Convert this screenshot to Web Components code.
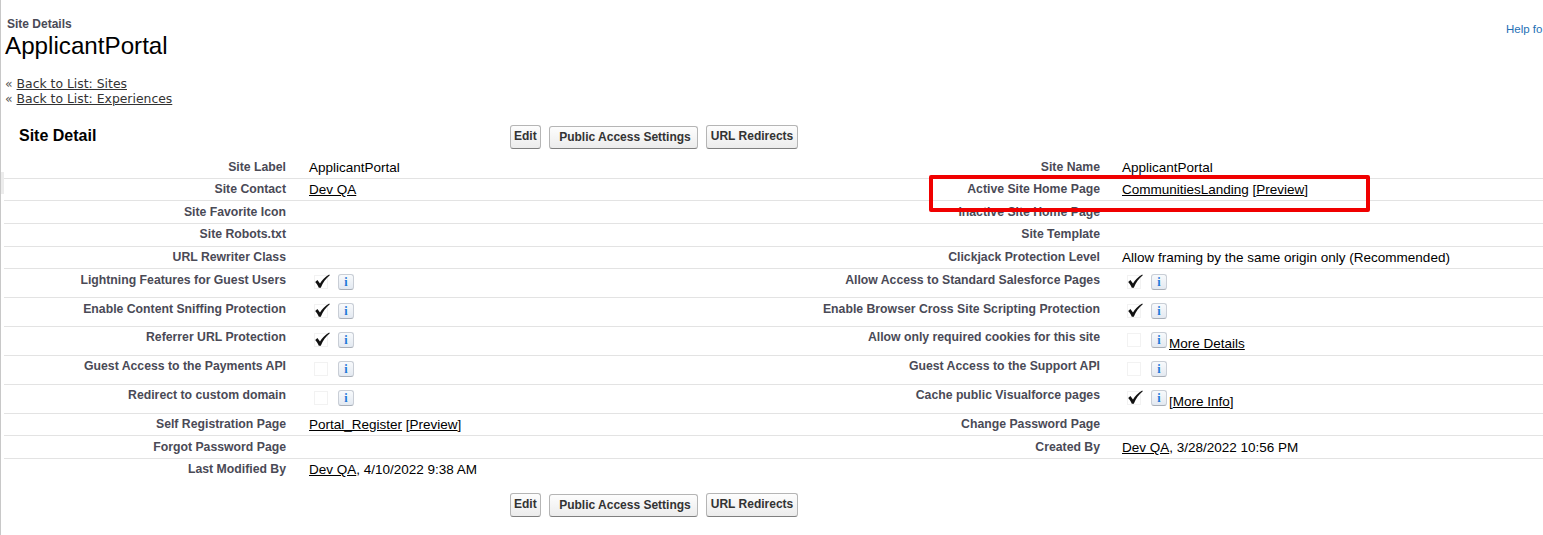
<!DOCTYPE html>
<html>
<head>
<meta charset="utf-8">
<title>Site Details</title>
<style>
  html, body { margin: 0; padding: 0; height: 100%; overflow: hidden; background: #fff; }
  body { font-family: "Liberation Sans", Arial, sans-serif; }
</style>
</head>
<body>
<site-page>
  <page-header slot="header" kicker="Site Details" title="ApplicantPortal" help="Help fo"></page-header>
  <back-links slot="header">
    <sf-link>Back to List: Sites</sf-link>
    <sf-link>Back to List: Experiences</sf-link>
  </back-links>

  <detail-block heading="Site Detail">
    <detail-row left="Site Label" right="Site Name">
      <span slot="l">ApplicantPortal</span>
      <span slot="r">ApplicantPortal</span>
    </detail-row>
    <detail-row left="Site Contact" right="Active Site Home Page">
      <sf-link slot="l">Dev QA</sf-link>
      <span slot="r"><sf-link>CommunitiesLanding</sf-link> [<sf-link>Preview</sf-link>]</span>
    </detail-row>
    <detail-row left="Site Favorite Icon" right="Inactive Site Home Page"></detail-row>
    <detail-row left="Site Robots.txt" right="Site Template"></detail-row>
    <detail-row left="URL Rewriter Class" right="Clickjack Protection Level">
      <span slot="r">Allow framing by the same origin only (Recommended)</span>
    </detail-row>
    <detail-row tall left="Lightning Features for Guest Users" right="Allow Access to Standard Salesforce Pages">
      <check-info slot="l" checked></check-info>
      <check-info slot="r" checked></check-info>
    </detail-row>
    <detail-row tall left="Enable Content Sniffing Protection" right="Enable Browser Cross Site Scripting Protection">
      <check-info slot="l" checked></check-info>
      <check-info slot="r" checked></check-info>
    </detail-row>
    <detail-row tall left="Referrer URL Protection" right="Allow only required cookies for this site">
      <check-info slot="l" checked></check-info>
      <check-info slot="r"><sf-link>More Details</sf-link></check-info>
    </detail-row>
    <detail-row tall left="Guest Access to the Payments API" right="Guest Access to the Support API">
      <check-info slot="l"></check-info>
      <check-info slot="r"></check-info>
    </detail-row>
    <detail-row tall left="Redirect to custom domain" right="Cache public Visualforce pages">
      <check-info slot="l"></check-info>
      <check-info slot="r" checked><span>[<sf-link>More Info</sf-link>]</span></check-info>
    </detail-row>
    <detail-row left="Self Registration Page" right="Change Password Page">
      <span slot="l"><sf-link>Portal_Register</sf-link> [<sf-link>Preview</sf-link>]</span>
    </detail-row>
    <detail-row left="Forgot Password Page" right="Created By">
      <span slot="r"><sf-link>Dev QA</sf-link>, 3/28/2022 10:56 PM</span>
    </detail-row>
    <detail-row last left="Last Modified By" right="">
      <span slot="l"><sf-link>Dev QA</sf-link>, 4/10/2022 9:38 AM</span>
    </detail-row>
  </detail-block>
  <red-box></red-box>
</site-page>

<script>
class SitePage extends HTMLElement {
  constructor() {
    super();
    this.attachShadow({ mode: "open" }).innerHTML = `
      <style>
        :host { display: block; position: relative; height: 535px; box-sizing: border-box;
                border-left: 1px solid #c8c8c8; color: #000; overflow: hidden; }
        .grip { position: absolute; left: 0; top: 172px; width: 3px; height: 22px; background: #ececec; }
      </style>
      <div class="grip"></div>
      <slot name="header"></slot>
      <slot></slot>`;
  }
}

class PageHeader extends HTMLElement {
  constructor() {
    super();
    this.attachShadow({ mode: "open" }).innerHTML = `
      <style>
        :host { display: flex; justify-content: space-between; padding: 18px 0 0 4px; }
        .kicker { font: bold 12px/12px "Liberation Sans", Arial, sans-serif; color: #4a4a56; padding-left: 2px; }
        h1 { margin: 2px 0 0; font: normal 24.2px/27px "Liberation Sans", Arial, sans-serif; color: #000; }
        a { font: 11.5px/14px "Liberation Sans", Arial, sans-serif; color: #1f6fb5; width: 37px; margin-top: 4px; white-space: nowrap; }
      </style>
      <div>
        <div class="kicker">${this.getAttribute("kicker")}</div>
        <h1>${this.getAttribute("title")}</h1>
      </div>
      <a>${this.getAttribute("help")}</a>`;
  }
}

class BackLinks extends HTMLElement {
  constructor() {
    super();
    this.attachShadow({ mode: "open" }).innerHTML = `
      <style>
        :host { display: block; padding: 17px 0 0 4px; height: 33px;
                font: 12.4px/15px "DejaVu Sans", Verdana, sans-serif; color: #333; }
        div { white-space: nowrap; }
        i { font-style: normal; color: #555; }
      </style>
      ${[...this.children].map((c, n) => `<div><i>«</i> <slot name="l${n}"></slot></div>`).join("")}`;
    [...this.children].forEach((c, n) => c.setAttribute("slot", "l" + n));
  }
}

class SfLink extends HTMLElement {
  constructor() {
    super();
    this.attachShadow({ mode: "open" }).innerHTML = `<style>
        :host { display: inline; }
        a { color: inherit; text-decoration: underline; }
      </style><a><slot></slot></a>`;
  }
}

class SfButton extends HTMLElement {
  constructor() {
    super();
    this.attachShadow({ mode: "open" }).innerHTML = `<style>
        :host { display: block; box-sizing: border-box; height: 24px; padding: 0 3.5px;
                font: bold 12px/21px "Liberation Sans", Arial, sans-serif; color: #333;
                border: 1px solid #b5b5b5; border-bottom-color: #7f7f7f; border-radius: 3px;
                background: linear-gradient(#fdfdfd, #ececec); white-space: nowrap; }
        :host([wide]) { padding: 0 6.5px 0 9.5px; margin-top: 1px; height: 23px; line-height: 20px; }
        :host([short]) { padding: 0 3px; }
      </style><slot></slot>`;
  }
}

class ButtonBar extends HTMLElement {
  constructor() {
    super();
    this.attachShadow({ mode: "open" }).innerHTML = `
      <style>
        :host { display: flex; gap: 8px; align-items: flex-start; }
      </style>
      <sf-button short>Edit</sf-button>
      <sf-button wide>Public Access Settings</sf-button>
      <sf-button>URL Redirects</sf-button>`;
  }
}

class DetailBlock extends HTMLElement {
  constructor() {
    super();
    this.attachShadow({ mode: "open" }).innerHTML = `
      <style>
        :host { display: block; margin-left: 3px; padding-top: 16px; }
        .top { display: grid; grid-template-columns: 506px auto; align-items: center; height: 24px; margin-bottom: 7px; }
        h2 { margin: 0; padding: 0 0 3px 15px; font: bold 16px/18px "Liberation Sans", Arial, sans-serif; color: #000; }
        .bottom { display: grid; grid-template-columns: 506px auto; margin-top: 11px; }
      </style>
      <div class="top"><h2>${this.getAttribute("heading")}</h2><button-bar></button-bar></div>
      <slot></slot>
      <div class="bottom"><span></span><button-bar></button-bar></div>`;
  }
}

class DetailRow extends HTMLElement {
  constructor() {
    super();
    this.attachShadow({ mode: "open" }).innerHTML = `
      <style>
        :host { display: grid; grid-template-columns: 282px 323px 491px 1fr; height: 22.65px; box-sizing: border-box;
                border-bottom: 1px solid #e3e3e3; font: 13.5px/16px "Liberation Sans", Arial, sans-serif; color: #000; }
        :host([tall]) { height: 28.9px; }
        :host([last]) { border-bottom: 0; }
        .label { text-align: right; padding-top: 3.5px; font: bold 12.25px/14px "Liberation Sans", Arial, sans-serif; color: #4a4a56; white-space: nowrap; }
        .value { padding-top: 3.5px; white-space: nowrap; }
        .value.first { padding-left: 23px; }
        .value.second { padding-left: 22px; }
      </style>
      <div class="label">${this.getAttribute("left")}</div>
      <div class="value first"><slot name="l"></slot></div>
      <div class="label">${this.getAttribute("right")}</div>
      <div class="value second"><slot name="r"></slot></div>`;
  }
}

class CheckInfo extends HTMLElement {
  constructor() {
    super();
    const mark = this.hasAttribute("checked")
      ? `<path d="M1.2 8 L3.4 6 L6 9.4 C8 6 10.8 2.8 15.2 0.4 L15.8 1.2 C11.6 4.6 9 8.4 6.8 13.8 L4.8 13.8 C3.8 11.4 2.6 9.6 1.2 8 Z" fill="#111"/>`
      : "";
    this.attachShadow({ mode: "open" }).innerHTML = `
      <style>
        :host { display: flex; align-items: flex-start; padding: 0 0 0 5px; margin-top: -0.5px; }
        svg { flex: none; display: block; margin-top: 2px; overflow: visible; }
        .info { flex: none; box-sizing: border-box; width: 16px; height: 16px; margin: 2px 0 0 10px; border-radius: 3px;
                border: 1px solid #c9ced6; border-bottom-color: #a9afb8; background: linear-gradient(#f8fafc, #e3e9f1);
                font: bold 12px/14px "Liberation Serif", "Times New Roman", serif; color: #1f78d8; text-align: center; }
        .more { padding: 6px 0 0 2px; }
      </style>
      <svg width="14" height="15" viewBox="0 0 14 15">
        <rect x="0.5" y="1.5" width="13" height="13" fill="#fff" stroke="#e4e4e4" stroke-dasharray="1 1"/>
        ${mark}
      </svg>
      <div class="info">i</div>
      <div class="more"><slot></slot></div>`;
  }
}

class RedBox extends HTMLElement {
  constructor() {
    super();
    this.attachShadow({ mode: "open" }).innerHTML = `
      <style>
        :host { position: absolute; left: 928px; top: 175px; width: 441px; height: 37px; box-sizing: border-box;
                border: 4px solid #f00000; border-radius: 2px; }
      </style>`;
  }
}

customElements.define("site-page", SitePage);
customElements.define("page-header", PageHeader);
customElements.define("back-links", BackLinks);
customElements.define("sf-link", SfLink);
customElements.define("sf-button", SfButton);
customElements.define("button-bar", ButtonBar);
customElements.define("detail-block", DetailBlock);
customElements.define("detail-row", DetailRow);
customElements.define("check-info", CheckInfo);
customElements.define("red-box", RedBox);
</script>
</body>
</html>
